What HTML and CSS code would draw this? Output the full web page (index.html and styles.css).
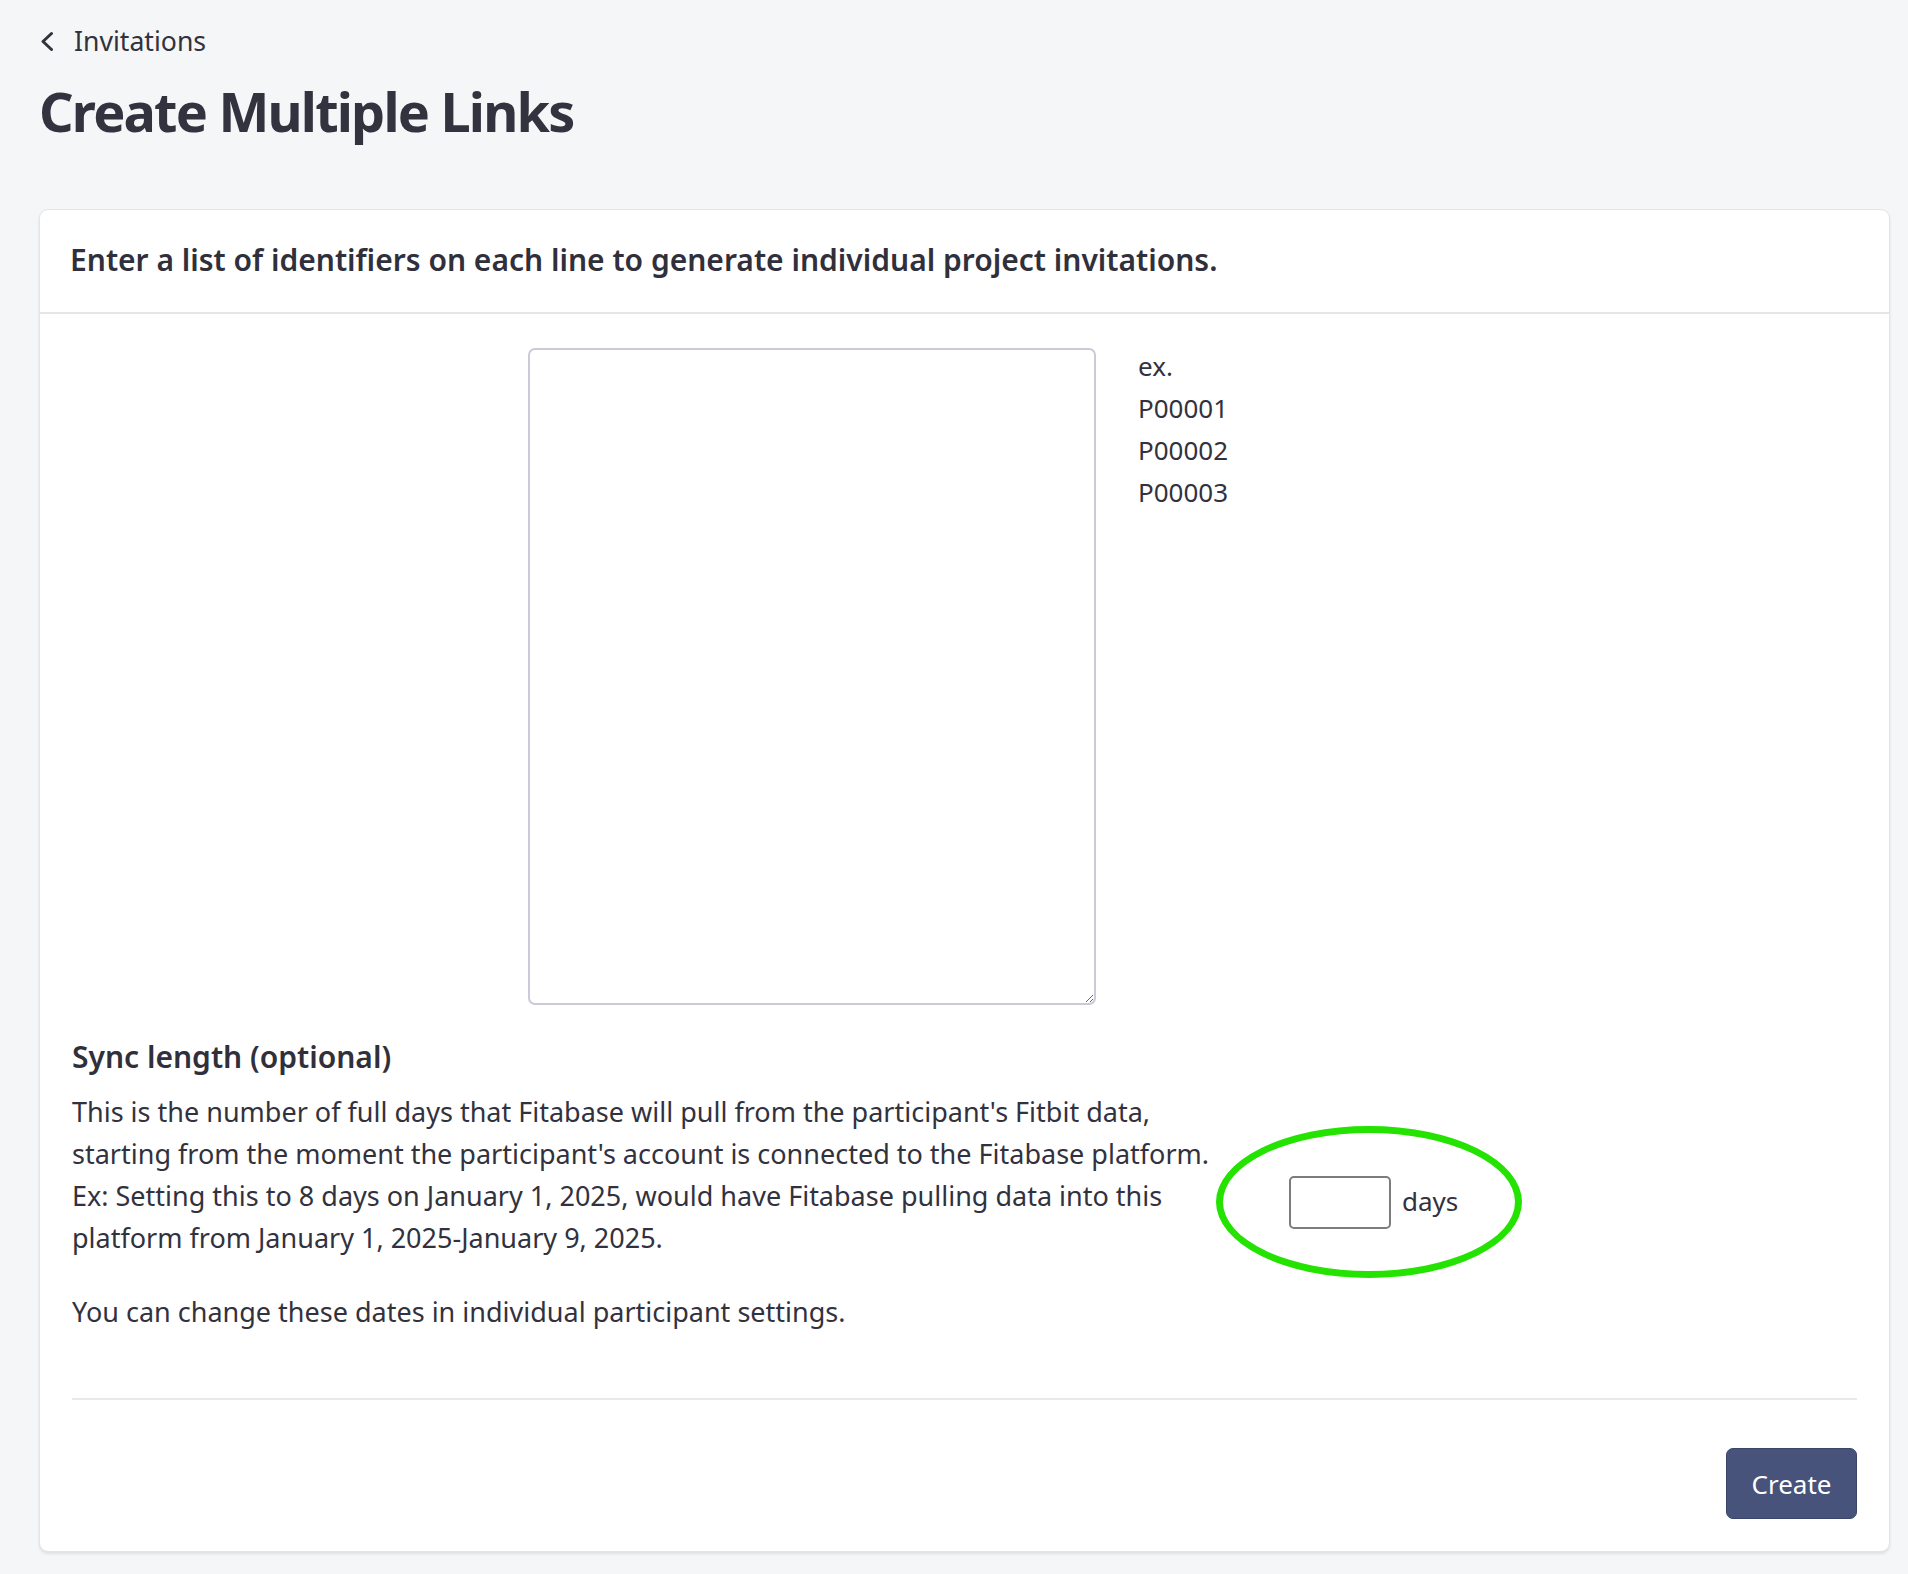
FILE: index.html
```html
<!DOCTYPE html>
<html lang="en">
<head>
<meta charset="utf-8">
<title>Create Multiple Links</title>
<link rel="stylesheet" href="styles.css">
</head>
<body>
<div class="page">
  <a class="back-link" href="#">
    <svg class="back-icon" width="14" height="20" viewBox="0 0 14 20" aria-hidden="true"><polyline points="11.5,2.5 3,10.5 11.5,18.5" fill="none" stroke="currentColor" stroke-width="3" stroke-linecap="round" stroke-linejoin="round"/></svg>
    <span>Invitations</span>
  </a>
  <h1 class="page-title">Create Multiple Links</h1>

  <section class="card">
    <header class="card-header">
      <h2 class="card-title">Enter a list of identifiers on each line to generate individual project invitations.</h2>
    </header>
    <div class="card-body">
      <div class="ids-row">
        <textarea class="ids-input"></textarea>
        <ul class="example-list">
          <li>ex.</li>
          <li>P00001</li>
          <li>P00002</li>
          <li>P00003</li>
        </ul>
      </div>

      <div class="sync-row">
        <div class="sync-text">
          <h3 class="sync-title">Sync length (optional)</h3>
          <p class="sync-desc">This is the number of full days that Fitabase will pull from the participant's Fitbit data,<br>starting from the moment the participant's account is connected to the Fitabase platform.<br>Ex: Setting this to 8 days on January 1, 2025, would have Fitabase pulling data into this<br>platform from January 1, 2025-January 9, 2025.</p>
          <p class="sync-note">You can change these dates in individual participant settings.</p>
        </div>
        <div class="days-field">
          <input class="days-input" type="text">
          <span class="days-label">days</span>
        </div>
      </div>

      <hr class="divider">

      <div class="card-footer">
        <button class="btn-primary" type="button">Create</button>
      </div>
    </div>
  </section>
</div>
</body>
</html>
```
FILE: styles.css
```css
* { box-sizing: border-box; }

html, body {
  margin: 0;
  background: #f5f6f8;
}

body {
  font-family: "Noto Sans", "Open Sans", sans-serif;
  color: #32323e;
}

.page {
  padding: 21px 18px 22px 39px;
}

.back-link {
  display: flex;
  align-items: center;
  gap: 20px;
  height: 40px;
  padding-left: 1px;
  color: #32323e;
  text-decoration: none;
  font-size: 26.6px;
  line-height: 40px;
}

.back-icon {
  display: block;
  flex: none;
}

.page-title {
  margin: 18px 0 0;
  font-size: 54px;
  line-height: 64px;
  font-weight: 700;
  letter-spacing: -1.8px;
  color: #33333f;
}

.card {
  margin-top: 66px;
  background: #fff;
  border: 1px solid #e3e4e7;
  border-radius: 9px;
  box-shadow: 0 2px 3px rgba(0, 0, 0, 0.09);
}

.card-header {
  padding: 29px 30px 31px;
  border-bottom: 2px solid #e6e6e9;
}

.card-title {
  margin: 0;
  font-size: 30px;
  line-height: 42px;
  font-weight: 600;
  color: #30303c;
}

.card-body {
  padding: 30px 32px 32px;
}

.ids-row {
  display: flex;
  align-items: flex-start;
  gap: 42px;
  padding-left: 456px;
}

.ids-input {
  display: block;
  margin-top: 4px;
  width: 568px;
  height: 657px;
  border: 2px solid #cbcad9;
  border-radius: 7px;
  background: #fff;
  font-family: inherit;
  font-size: 26px;
  resize: vertical;
}

.example-list {
  margin: 1px 0 0;
  padding: 0;
  list-style: none;
  font-size: 26px;
  line-height: 42px;
}

.sync-row {
  display: flex;
  align-items: flex-start;
  margin-top: 32px;
}

.sync-text {
  flex: 0 0 1144px;
}

.sync-title {
  margin: 0;
  font-size: 30px;
  line-height: 40px;
  font-weight: 600;
  color: #30303c;
}

.sync-desc {
  margin: 14px 0 0;
  font-size: 27px;
  line-height: 42px;
  white-space: nowrap;
}

.sync-note {
  margin: 32px 0 0;
  font-size: 27px;
  line-height: 42px;
}

.days-field {
  display: flex;
  align-items: center;
  gap: 11px;
  margin-top: 89px;
  width: 306px;
  height: 152px;
  padding-left: 66px;
  border: 7px solid #24e300;
  border-radius: 50%;
}

.days-input {
  width: 102px;
  height: 53px;
  border: 2px solid #7c7c7c;
  border-radius: 5px;
  background: #fff;
  font-family: inherit;
  font-size: 26px;
}

.days-label {
  font-size: 26px;
  line-height: 40px;
  padding-bottom: 2px;
}

.divider {
  margin: 65px 0 0;
  border: 0;
  border-top: 2px solid #e9e9ec;
}

.card-footer {
  display: flex;
  justify-content: flex-end;
  padding-top: 48px;
}

.btn-primary {
  display: flex;
  align-items: center;
  justify-content: center;
  width: 131px;
  height: 71px;
  padding: 0;
  border: 1px solid #3b4569;
  border-radius: 7px;
  background: #47537a;
  color: #fff;
  font-family: inherit;
  font-size: 26px;
  cursor: pointer;
}
```
